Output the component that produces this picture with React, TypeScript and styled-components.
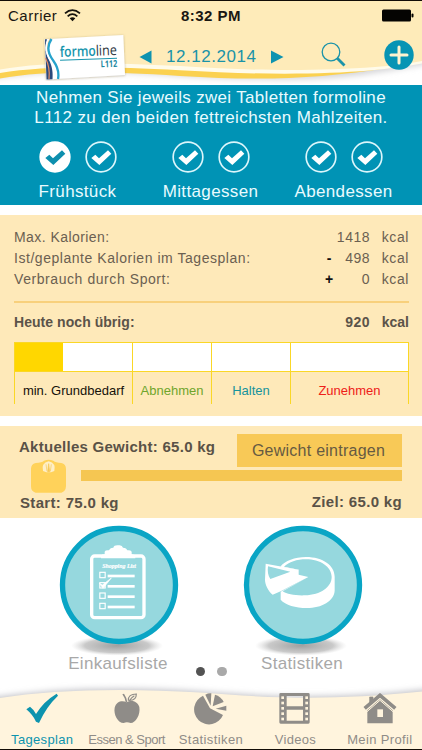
import React from 'react';
import styled, { createGlobalStyle } from 'styled-components';

const GlobalStyle = createGlobalStyle`
  * { box-sizing: border-box; }
  body { margin: 0; background: #fff; }
`;

const Screen = styled.div`
  width: 422px;
  height: 750px;
  display: flex;
  flex-direction: column;
  overflow: hidden;
  background: #fff;
  font-family: 'Liberation Sans', Arial, sans-serif;
  white-space: nowrap;
  border-top: 1px solid #120c06;
  border-bottom: 1px solid #120c06;
`;

/* ---------- header ---------- */

const Header = styled.header`
  position: relative;
  height: 84px;
  flex: none;
`;

const HeaderWave = styled.svg`
  position: absolute;
  inset: 0;
`;

const StatusBar = styled.div`
  position: relative;
  display: grid;
  grid-template-columns: 1fr auto 1fr;
  align-items: center;
  height: 29px;
  padding: 0 8px;
  font-size: 15px;
  line-height: 28px;
  color: #1a1712;
`;

const Carrier = styled.div`
  display: flex;
  align-items: center;
  gap: 7px;
  letter-spacing: 0.5px;
`;

const Clock = styled.div`
  font-weight: bold;
  letter-spacing: 0.5px;
`;

const Battery = styled.svg`
  justify-self: end;
`;

const NavBar = styled.nav`
  position: relative;
  display: flex;
  align-items: center;
  height: 54px;
  padding-left: 43px;
`;

const Logo = styled.svg`
  flex: none;
  margin-right: 12px;
`;

const Arrow = styled.svg`
  flex: none;
  margin-top: -1px;
`;

const DateText = styled.div`
  width: 91px;
  margin: 0 14px;
  font-size: 17px;
  letter-spacing: 0.55px;
  color: #1a93a8;
`;

const SearchIcon = styled.svg`
  flex: none;
  margin: -5px 38px 0 37px;
`;

const AddIcon = styled.svg`
  flex: none;
  margin-top: -4px;
`;

/* ---------- intake reminder ---------- */

const Intake = styled.section`
  flex: none;
  height: 120px;
  padding-top: 3px;
  background: #0093b5;
  color: #e9fbff;
  font-size: 17px;
`;

const IntakeText = styled.p<{ $spacing: number }>`
  margin: 0;
  text-align: center;
  line-height: 20.3px;
  letter-spacing: ${(p) => p.$spacing}px;
`;

const Meals = styled.div`
  display: grid;
  grid-template-columns: repeat(3, 133px);
  padding: 12px 0 0 11.5px;
`;

const Meal = styled.div`
  display: flex;
  flex-direction: column;
  align-items: center;
`;

const Checks = styled.div`
  display: flex;
  gap: 14px;
  height: 32px;
`;

const MealName = styled.div`
  margin-top: 8px;
  padding-right: 1px;
  line-height: 21px;
  letter-spacing: 0.35px;
`;

/* ---------- calories ---------- */

const Calories = styled.section`
  flex: none;
  height: 201px;
  margin-top: 10px;
  padding: 12px 13px 0 14px;
  background: #fee9b9;
  font-size: 14px;
`;

const CalorieRow = styled.div<{ $strong?: boolean }>`
  display: grid;
  grid-template-columns: 1fr 14px 34px 39px;
  line-height: 21.2px;
  font-weight: ${(p) => (p.$strong ? 'bold' : 'normal')};
  color: ${(p) => (p.$strong ? '#5b5349' : '#6b6051')};
`;

const RowLabel = styled.span<{ $spacing: number }>`
  letter-spacing: ${(p) => p.$spacing}px;
`;

const Sign = styled.span`
  text-align: center;
  font-weight: bold;
  color: #111;
`;

const Amount = styled.span`
  text-align: right;
  letter-spacing: 0.5px;
`;

const Unit = styled.span<{ $strong?: boolean }>`
  text-align: right;
  letter-spacing: ${(p) => (p.$strong ? 0 : 0.6)}px;
`;

const Divider = styled.hr`
  height: 2px;
  margin: 10px 0 9px;
  border: 0;
  background: #f8d07c;
`;

const Scale = styled.div`
  display: grid;
  grid-template-columns: 118px 79px 79px 118px;
  width: 395px;
  height: 62px;
  margin-top: 9px;
  border-top: 1px solid #fad726;
  border-right: 1px solid #fad726;
`;

const Zone = styled.div<{ $color: string }>`
  height: 61px;
  border-left: 1px solid #fad726;
  text-align: center;
  font-size: 13px;
  line-height: 38px;
  color: ${(p) => p.$color};
`;

const Meter = styled.div`
  height: 29px;
  background: #fff;
  border-bottom: 1px solid #fad726;
`;

const MeterFill = styled.div`
  height: 28px;
  background: #ffd700;
`;

/* ---------- weight ---------- */

const Weight = styled.section`
  flex: none;
  height: 92px;
  margin-top: 10px;
  padding: 8px 20px 0 19px;
  background: #fee9b9;
  color: #5a5247;
  font-size: 15px;
  font-weight: bold;
`;

const WeightTop = styled.div`
  display: flex;
  justify-content: space-between;
  height: 33px;
  line-height: 26px;
  letter-spacing: 0.27px;
`;

const EnterWeight = styled.button`
  width: 165px;
  height: 33px;
  padding: 0;
  border: 0;
  background: #f8c957;
  color: #665a42;
  font: 16px/33px 'Liberation Sans', Arial, sans-serif;
  letter-spacing: 0.25px;
  text-indent: -2px;
`;

const WeightMiddle = styled.div`
  display: flex;
  gap: 14px;
  height: 26px;
  padding-left: 11px;
`;

const ScaleIcon = styled.svg`
  flex: none;
  margin-top: -8px;
`;

const Progress = styled.div`
  flex: 1;
  height: 11px;
  margin-top: 3px;
  background: #f5c652;
`;

const WeightBottom = styled.div`
  display: flex;
  justify-content: space-between;
  padding-left: 1px;
  line-height: 20px;
  letter-spacing: 0.33px;
`;

const Goal = styled.span`
  margin-top: -1px;
`;

/* ---------- shortcuts ---------- */

const Shortcuts = styled.section`
  flex: 1;
  display: flex;
  justify-content: space-between;
  align-items: flex-start;
  padding: 6px 58px 0;
`;

const Shortcut = styled.div`
  display: flex;
  flex-direction: column;
  align-items: center;
  width: 122px;
`;

const ShortcutName = styled.div`
  margin-top: -6px;
  padding-right: 2px;
  font-size: 17px;
  line-height: 20px;
  letter-spacing: 0.33px;
  color: #a8a8a8;
`;

const Pager = styled.div`
  display: flex;
  gap: 12px;
  margin: 142.5px -20px 0;
`;

const Dot = styled.i<{ $active?: boolean }>`
  width: 9.5px;
  height: 9.5px;
  border-radius: 50%;
  background: ${(p) => (p.$active ? '#535353' : '#a9a9a9')};
`;

/* ---------- tab bar ---------- */

const TabBar = styled.nav`
  position: relative;
  flex: none;
  height: 67px;
`;

const TabWave = styled.svg`
  position: absolute;
  inset: 0;
`;

const Tabs = styled.div`
  position: relative;
  display: grid;
  grid-template-columns: repeat(5, 1fr);
  padding-top: 11px;
`;

const Tab = styled.div<{ $active?: boolean }>`
  display: flex;
  flex-direction: column;
  align-items: center;
  color: ${(p) => (p.$active ? '#0c93ae' : '#8f8c88')};
`;

const TabName = styled.div<{ $spacing: number }>`
  margin-top: 5px;
  font-size: 13px;
  line-height: 20px;
  letter-spacing: ${(p) => p.$spacing}px;
`;

function Check({ done }: { done?: boolean }) {
  return (
    <svg width="32" height="32" viewBox="0 0 96 96">
      <circle cx="48" cy="48" r="44.500" fill={done ? '#fff' : 'none'} stroke={done ? '#fff' : '#dcf6fb'} strokeWidth="5" />
      <path d="M19 51 L31 41 L42 52 L69 28 L79 38 L43 72 Z" fill={done ? '#0d8fae' : '#fff'} />
    </svg>
  );
}

function Wifi() {
  return (
    <svg width="17" height="13" viewBox="0 0 51 39" fill="none" stroke="#14110c" strokeWidth="5.500">
      <path d="M3 13 Q25 -6 48 13" />
      <path d="M11 22 Q25 9 40 22" />
      <path d="M17 28 Q25.500 21 34 28 L25.500 37 Z" fill="#14110c" stroke="none" />
    </svg>
  );
}

function FormolineLogo() {
  return (
    <Logo width="84" height="48" viewBox="43 33 84 48">
      <defs>
        <filter id="cardShadow" x="-10%" y="-10%" width="120%" height="130%">
          <feDropShadow dx="0" dy="0.500" stdDeviation="1" floodColor="#7c6a3c" floodOpacity="0.500" />
        </filter>
      </defs>
      <path d="M44.500 39.300 L123.300 35 L125 75 L46.200 79.600 Z" fill="#fff" filter="url(#cardShadow)" />
      <path d="M45 39.300 L47 39.200 C44.500 47 45.500 53 49 60 C52.500 67 53 73 52.500 79.200 L46.500 79.500 Z" fill="#2b4a7c" />
      <path d="M49.500 39 C46.500 46 47 51 51 57" fill="none" stroke="#f0cf8e" strokeWidth="1.300" />
      <path d="M51.500 39 C46 47 48 54 53.500 61 C58.500 68 59 74 58 79" fill="none" stroke="#27a3cc" strokeWidth="2.300" />
      <path d="M48.500 39 C44 47 46 54 50.800 61 C55 68 55.500 73 55 79" fill="none" stroke="#fff" strokeWidth="1.300" />
      <path d="M45.500 58 C49 65 50 70 49 79" fill="none" stroke="#e98f69" strokeWidth="1.200" />
      <g transform="rotate(-2 88 58)" fontFamily="'Open Sans', sans-serif">
        <text x="60" y="56" fontSize="14.500" fontWeight="600" fill="#1795ad" textLength="36" lengthAdjust="spacingAndGlyphs">formo</text>
        <text x="96" y="56" fontSize="14.500" fontWeight="500" fill="#2d353c" textLength="21" lengthAdjust="spacingAndGlyphs">line</text>
        <path d="M60 59.200 H117" stroke="#1795ad" strokeWidth="1.100" />
        <text x="100.500" y="67.800" fontSize="9.500" fontWeight="bold" fill="#1b87a0" textLength="16.500" lengthAdjust="spacingAndGlyphs">L112</text>
      </g>
    </Logo>
  );
}

function Disc({ id, children }: { id: string; children: React.ReactNode }) {
  return (
    <svg width="122" height="136" viewBox="-183 -183 366 408">
      <defs>
        <radialGradient id={id}>
          <stop offset="0" stopColor="#777" stopOpacity="0.700" />
          <stop offset="0.700" stopColor="#888" stopOpacity="0.450" />
          <stop offset="1" stopColor="#bbb" stopOpacity="0" />
        </radialGradient>
      </defs>
      <ellipse cx="-6" cy="182" rx="138" ry="30" fill={`url(#${id})`} />
      <circle r="169.500" fill="#96d8de" stroke="#09a5c5" strokeWidth="16" />
      {children}
    </svg>
  );
}

function ShoppingList() {
  return (
    <Disc id="listShadow">
      <g transform="translate(-237 -209)">
        <rect x="155" y="122" width="157" height="185" rx="9" fill="none" stroke="#fff" strokeWidth="10" />
        <path d="M183 129 V121 Q184 117 194 117 V109 Q196 104 207 105 Q209 98 220 97 Q222 90 232 90 H239 Q247 91 249 97 Q260 98 262 105 Q272 104 275 109 V117 Q285 118 286 121 V129 Z" fill="#fff" />
        <text x="187" y="158" fontFamily="'Liberation Serif', serif" fontStyle="italic" fontWeight="bold" fontSize="19" fill="#fff" stroke="#fff" strokeWidth="0.600" textLength="101" lengthAdjust="spacingAndGlyphs">Shopping List</text>
        {[179, 210, 241, 272].map((y) => (
          <g key={y}>
            <rect x="179.500" y={y - 8} width="16" height="16" fill="none" stroke="#fff" strokeWidth="3.500" />
            <path d={`M203 ${y + 3} H284`} stroke="#fff" strokeWidth="8" />
          </g>
        ))}
        <path d="M178 204 L187 209 L214 188 L189 219 Z" fill="#fff" stroke="#fff" strokeWidth="2" />
      </g>
    </Disc>
  );
}

function Pie() {
  return (
    <Disc id="pieShadow">
      <g transform="translate(-340 -209)">
        <path fillRule="evenodd" fill="#fff" d="M272 154 C286 137 315 125 349 125 C400 125 435 151 435 184 V226 C433 257 397 278 351 278 C318 278 287 269 273 253 V229 L356 185 L327 178 V164 Z M283 154 L327 163 L327 178 L356 185 L279 228 C292 237 316 241 346 240 C393 239 426 215 426 185 C426 154 391 132 349 132 C321 132 298 140 283 154 Z" />
        <path fillRule="evenodd" fill="#fff" d="M228 145 L327 163 V178 L356 185 L273 228 L249 238 C235 226 226 207 226 193 Z M235 153 C233 168 235 181 242 191 L302 169 Z" />
      </g>
    </Disc>
  );
}

function TabIcon({ name }: { name: string }) {
  switch (name) {
    case 'check':
      return (
        <svg width="36" height="32" viewBox="76 57 108 96" fill="currentColor">
          <path d="M83 106 L94 98 Q104 105 112 120 Q135 82 174 59 L178 65 Q143 98 121 147 L112 143 Q102 122 83 106 Z" />
        </svg>
      );
    case 'apple':
      return (
        <svg width="36" height="32" viewBox="326 57 108 96" fill="currentColor">
          <path d="M379 85 C391 77 411 80 417 99 C421 122 406 147 391 147 Q379 143 370 147 C353 147 339 122 343 101 C348 81 367 78 379 85 Z" />
          <path d="M366 61 L371 59 Q379 70 381 85 L376 84 Q374 71 366 61 Z" />
          <path d="M384 80 Q383 60 408 60 Q408 79 388 79 Q393 70 402 65" fill="none" stroke="currentColor" strokeWidth="3.500" />
        </svg>
      );
    case 'pie':
      return (
        <svg width="36" height="32" viewBox="-54 -47 108 96" fill="currentColor">
          <path d="M-3 -1 L-24 -39 A45 45 0 1 0 36 19 Z" />
          <path d="M-1 -9 L-17 -42 Q-8 -47 1 -46 Z" />
          <path d="M5 -7 L12 -42 Q30 -37 38 -20 Z" />
          <path d="M14 0 L46 -9 V6 Z" />
        </svg>
      );
    case 'film':
      return (
        <svg width="36" height="32" viewBox="-4 0 108 96" fill="currentColor">
          <path fillRule="evenodd" d="M7 0 H90 Q94 0 94 4 V88 Q94 92 90 92 H7 Q3 92 3 88 V4 Q3 0 7 0 Z M25 9 V40 H74 V9 Z M25 50 V83 H74 V50 Z" />
          {[10, 26, 42, 58, 74].map((y) => (
            <g key={y} fill="#fff4dd">
              <rect x="9" y={y} width="8" height="8" />
              <rect x="81" y={y} width="8" height="8" />
            </g>
          ))}
        </svg>
      );
    default:
      return (
        <svg width="36" height="32" viewBox="-54 0 108 96">
          <path d="M-38 52 L0 19 L38 52 V91 H-38 Z" fill="currentColor" />
          <path d="M-31 32 V12 H-21 V25 Z" fill="currentColor" stroke="currentColor" strokeWidth="2" />
          <path d="M-46 46 L0 7 L46 46" fill="none" stroke="currentColor" strokeWidth="11" />
          <path d="M-40 57 L0 22 L40 57" fill="none" stroke="#fff4dd" strokeWidth="3" />
          <rect x="-8" y="49" width="17" height="23" fill="#fff4dd" />
        </svg>
      );
  }
}

const meals = [
  { name: 'Frühstück', done: true },
  { name: 'Mittagessen', done: false },
  { name: 'Abendessen', done: false },
];

const zones = [
  { name: 'min. Grundbedarf', color: '#15110a', fill: 41 },
  { name: 'Abnehmen', color: '#6fa52c', fill: 0 },
  { name: 'Halten', color: '#16939c', fill: 0 },
  { name: 'Zunehmen', color: '#ee2018', fill: 0 },
];

const tabs = [
  { name: 'Tagesplan', icon: 'check', spacing: 0.33 },
  { name: 'Essen & Sport', icon: 'apple', spacing: -0.5 },
  { name: 'Statistiken', icon: 'pie', spacing: 0.4 },
  { name: 'Videos', icon: 'film', spacing: 0.3 },
  { name: 'Mein Profil', icon: 'home', spacing: 0.35 },
];

export default function App() {
  return (
    <Screen>
      <GlobalStyle />
      <Header>
        <HeaderWave width="422" height="84" viewBox="0 1 422 84">
          <defs>
            <filter id="waveBlur"><feGaussianBlur stdDeviation="3" /></filter>
          </defs>
          <rect y="1" width="422" height="84" fill="#fff" />
          <path d="M-10 79 C45 70 100 70 180 76 C250 80 310 81 360 75 Q395 70 432 63 V40 H-10 Z" fill="#d3d3d6" filter="url(#waveBlur)" />
          <path d="M0 78.500 C45 70.500 100 71 180 76 C260 81 320 79 390 67.500 V50 H0 Z" fill="#fbd150" />
          <path d="M0 73 C45 66 100 66 180 70.300 C260 75 320 74.500 370 70.500 Q400 67.500 422 63.500 V40 H0 Z" fill="#fffbea" />
          <path d="M0 69.500 C45 61.500 100 62 180 66 C260 71.500 320 71 375 67 Q400 65 422 61 V1 H0 Z" fill="#feebb9" />
        </HeaderWave>
        <StatusBar>
          <Carrier>
            Carrier
            <Wifi />
          </Carrier>
          <Clock>8:32 PM</Clock>
          <Battery width="33" height="13" viewBox="0 0 33 13">
            <rect x="1" y="0.500" width="29" height="12" rx="1.500" fill="#050402" />
            <rect x="30.500" y="4.500" width="2" height="4" rx="1" fill="#050402" />
          </Battery>
        </StatusBar>
        <NavBar>
          <FormolineLogo />
          <Arrow width="13" height="14" viewBox="0 0 13 14"><path d="M12.500 0.500 V13.500 L0.500 7 Z" fill="#0e93b0" /></Arrow>
          <DateText>12.12.2014</DateText>
          <Arrow width="13" height="14" viewBox="0 0 13 14"><path d="M0 0.500 V13.500 L12.500 7 Z" fill="#0e93b0" /></Arrow>
          <SearchIcon width="25" height="25" viewBox="0 0 25 25" fill="none" stroke="#1b93a9">
            <circle cx="10" cy="10" r="8.800" strokeWidth="1.300" />
            <path d="M16 16 L23.500 23.500" strokeWidth="2.800" />
          </SearchIcon>
          <AddIcon width="30" height="30" viewBox="0 0 30 30">
            <circle cx="15" cy="15" r="14.700" fill="#0794b4" />
            <path d="M15 7 V23 M7 15 H23" stroke="#fff3cf" strokeWidth="3" strokeLinecap="round" />
          </AddIcon>
        </NavBar>
      </Header>

      <Intake>
        <IntakeText $spacing={0.32}>Nehmen Sie jeweils zwei Tabletten formoline</IntakeText>
        <IntakeText $spacing={0.37}>L112 zu den beiden fettreichsten Mahlzeiten.</IntakeText>
        <Meals>
          {meals.map((m) => (
            <Meal key={m.name}>
              <Checks>
                <Check done={m.done} />
                <Check />
              </Checks>
              <MealName>{m.name}</MealName>
            </Meal>
          ))}
        </Meals>
      </Intake>

      <Calories>
        <CalorieRow>
          <RowLabel $spacing={0.44}>Max. Kalorien:</RowLabel>
          <Sign />
          <Amount>1418</Amount>
          <Unit>kcal</Unit>
        </CalorieRow>
        <CalorieRow>
          <RowLabel $spacing={0.54}>Ist/geplante Kalorien im Tagesplan:</RowLabel>
          <Sign>-</Sign>
          <Amount>498</Amount>
          <Unit>kcal</Unit>
        </CalorieRow>
        <CalorieRow>
          <RowLabel $spacing={0.57}>Verbrauch durch Sport:</RowLabel>
          <Sign>+</Sign>
          <Amount>0</Amount>
          <Unit>kcal</Unit>
        </CalorieRow>
        <Divider />
        <CalorieRow $strong>
          <RowLabel $spacing={0.05}>Heute noch übrig:</RowLabel>
          <Sign />
          <Amount>920</Amount>
          <Unit $strong>kcal</Unit>
        </CalorieRow>
        <Scale>
          {zones.map((z) => (
            <Zone key={z.name} $color={z.color}>
              <Meter>
                <MeterFill style={{ width: `${z.fill}%` }} />
              </Meter>
              {z.name}
            </Zone>
          ))}
        </Scale>
      </Calories>

      <Weight>
        <WeightTop>
          <span>Aktuelles Gewicht: 65.0 kg</span>
          <EnterWeight>Gewicht eintragen</EnterWeight>
        </WeightTop>
        <WeightMiddle>
          <ScaleIcon width="37" height="35" viewBox="90 132 111 105">
            <path d="M107 144 Q126 143 132 137 Q146 131 160 137 Q167 143 184 144 Q198 147 198 162 V214 Q197 230 184 233 H107 Q93 230 93 214 V162 Q93 147 107 144 Z" fill="#ffd25a" />
            <path d="M129 168 Q123 145 146 139 Q169 145 163 168 L153 172 H139 Z" fill="#feefc8" />
            <path d="M143 170 L146 146 L149 170 Z M138 148 L141 169 M154 148 L151 169" fill="#f6c755" stroke="#f6c755" strokeWidth="2" />
          </ScaleIcon>
          <Progress />
        </WeightMiddle>
        <WeightBottom>
          <span>Start: 75.0 kg</span>
          <Goal>Ziel: 65.0 kg</Goal>
        </WeightBottom>
      </Weight>

      <Shortcuts>
        <Shortcut>
          <ShoppingList />
          <ShortcutName>Einkaufsliste</ShortcutName>
        </Shortcut>
        <Pager>
          <Dot $active />
          <Dot />
        </Pager>
        <Shortcut>
          <Pie />
          <ShortcutName>Statistiken</ShortcutName>
        </Shortcut>
      </Shortcuts>

      <TabBar>
        <TabWave width="422" height="67" viewBox="0 682 422 67">
          <defs>
            <filter id="tabBlur" x="-5%" y="-20%" width="110%" height="140%"><feGaussianBlur stdDeviation="3" /></filter>
          </defs>
          <path d="M-10 698 C50 689 120 686 200 691.500 C270 697 330 700 432 689 V760 H-10 Z" fill="#c2c2c7" filter="url(#tabBlur)" />
          <path d="M0 698 C50 690 120 687.500 200 692.500 C270 698 330 701 422 691.500 V749 H0 Z" fill="#fff4dd" />
        </TabWave>
        <Tabs>
          {tabs.map((t, i) => (
            <Tab key={t.name} $active={i === 0}>
              <TabIcon name={t.icon} />
              <TabName $spacing={t.spacing}>{t.name}</TabName>
            </Tab>
          ))}
        </Tabs>
      </TabBar>
    </Screen>
  );
}
